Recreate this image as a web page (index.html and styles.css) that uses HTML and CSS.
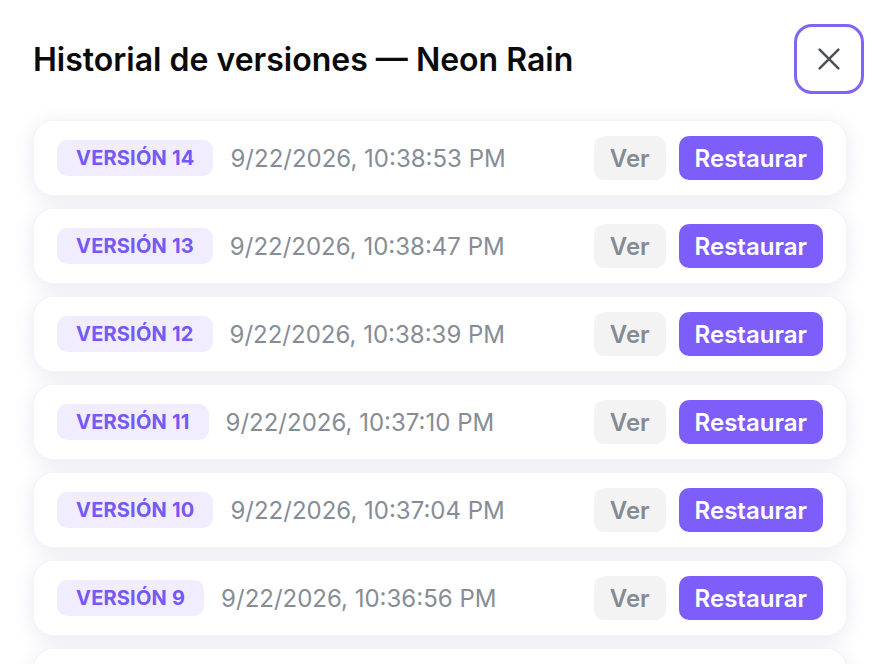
FILE: index.html
```html
<!DOCTYPE html>
<html lang="es">
<head>
<meta charset="utf-8">
<title>Historial de versiones</title>
<link rel="stylesheet" href="styles.css">
</head>
<body>
<div class="dialog">
  <header class="head">
    <h1 class="title">Historial de versiones — Neon Rain</h1>
    <button class="close" aria-label="Cerrar">
      <svg width="30" height="30" viewBox="0 0 24 24" fill="none" stroke="#4b5058" stroke-width="2" stroke-linecap="round"><path d="M4.5 4.5l15 15M19.5 4.5l-15 15"/></svg>
    </button>
  </header>
  <ul class="list">
    <li class="card"><span class="badge">Versión 14</span><span class="date">9/22/2026, 10:38:53 PM</span><span class="actions"><button class="btn ver">Ver</button><button class="btn restore">Restaurar</button></span></li>
    <li class="card"><span class="badge">Versión 13</span><span class="date">9/22/2026, 10:38:47 PM</span><span class="actions"><button class="btn ver">Ver</button><button class="btn restore">Restaurar</button></span></li>
    <li class="card"><span class="badge">Versión 12</span><span class="date">9/22/2026, 10:38:39 PM</span><span class="actions"><button class="btn ver">Ver</button><button class="btn restore">Restaurar</button></span></li>
    <li class="card"><span class="badge">Versión 11</span><span class="date">9/22/2026, 10:37:10 PM</span><span class="actions"><button class="btn ver">Ver</button><button class="btn restore">Restaurar</button></span></li>
    <li class="card"><span class="badge">Versión 10</span><span class="date">9/22/2026, 10:37:04 PM</span><span class="actions"><button class="btn ver">Ver</button><button class="btn restore">Restaurar</button></span></li>
    <li class="card"><span class="badge">Versión 9</span><span class="date">9/22/2026, 10:36:56 PM</span><span class="actions"><button class="btn ver">Ver</button><button class="btn restore">Restaurar</button></span></li>
    <li class="card card-peek" aria-hidden="true"></li>
  </ul>
</div>
</body>
</html>
```
FILE: styles.css
```css
* { box-sizing: border-box; }
html, body { margin: 0; padding: 0; background: #ffffff; }
body {
  font-family: Inter, "Noto Sans", "Liberation Sans", sans-serif;
  color: #0b0b0f;
  height: 664px;
  overflow: hidden;
}
.dialog {
  padding: 24px 16px 0 33px;
}
.head {
  display: flex;
  align-items: center;
  justify-content: space-between;
  height: 70px;
}
.title {
  margin: 0;
  font-size: 32px;
  font-weight: 600;
  letter-spacing: 0;
  color: #0a0a0a;
}
.close {
  width: 70px;
  height: 70px;
  border: 3px solid #8163f7;
  border-radius: 18px;
  background: #fff;
  display: flex;
  align-items: center;
  justify-content: center;
  padding: 0;
}
.list {
  list-style: none;
  margin: 26px 17px 0 0;
  padding: 0;
  display: flex;
  flex-direction: column;
  gap: 12px;
}
.card {
  display: flex;
  align-items: center;
  flex-shrink: 0;
  height: 76px;
  padding: 0 23px;
  background: #fff;
  border: 1px solid #f4f3f8;
  border-radius: 20px;
  box-shadow: 0 4px 20px rgba(80, 70, 150, 0.12);
}
.badge {
  background: #f1edff;
  color: #7459f3;
  font-size: 20px;
  font-weight: 700;
  text-transform: uppercase;
  letter-spacing: 0.2px;
  height: 36px;
  line-height: 36px;
  padding: 0 19px;
  border-radius: 10px;
}
.date {
  margin-left: 17px;
  color: #868d96;
  font-size: 24px;
  font-weight: 400;
}
.actions {
  margin-left: auto;
  display: flex;
  gap: 13px;
}
.btn {
  font-family: inherit;
  font-size: 24px;
  font-weight: 600;
  height: 44px;
  border: none;
  border-radius: 10px;
  padding: 0 16px;
}
.ver {
  background: #f3f3f4;
  color: #858b94;
}
.restore {
  background: #7e5efa;
  color: #fff;
}
```
